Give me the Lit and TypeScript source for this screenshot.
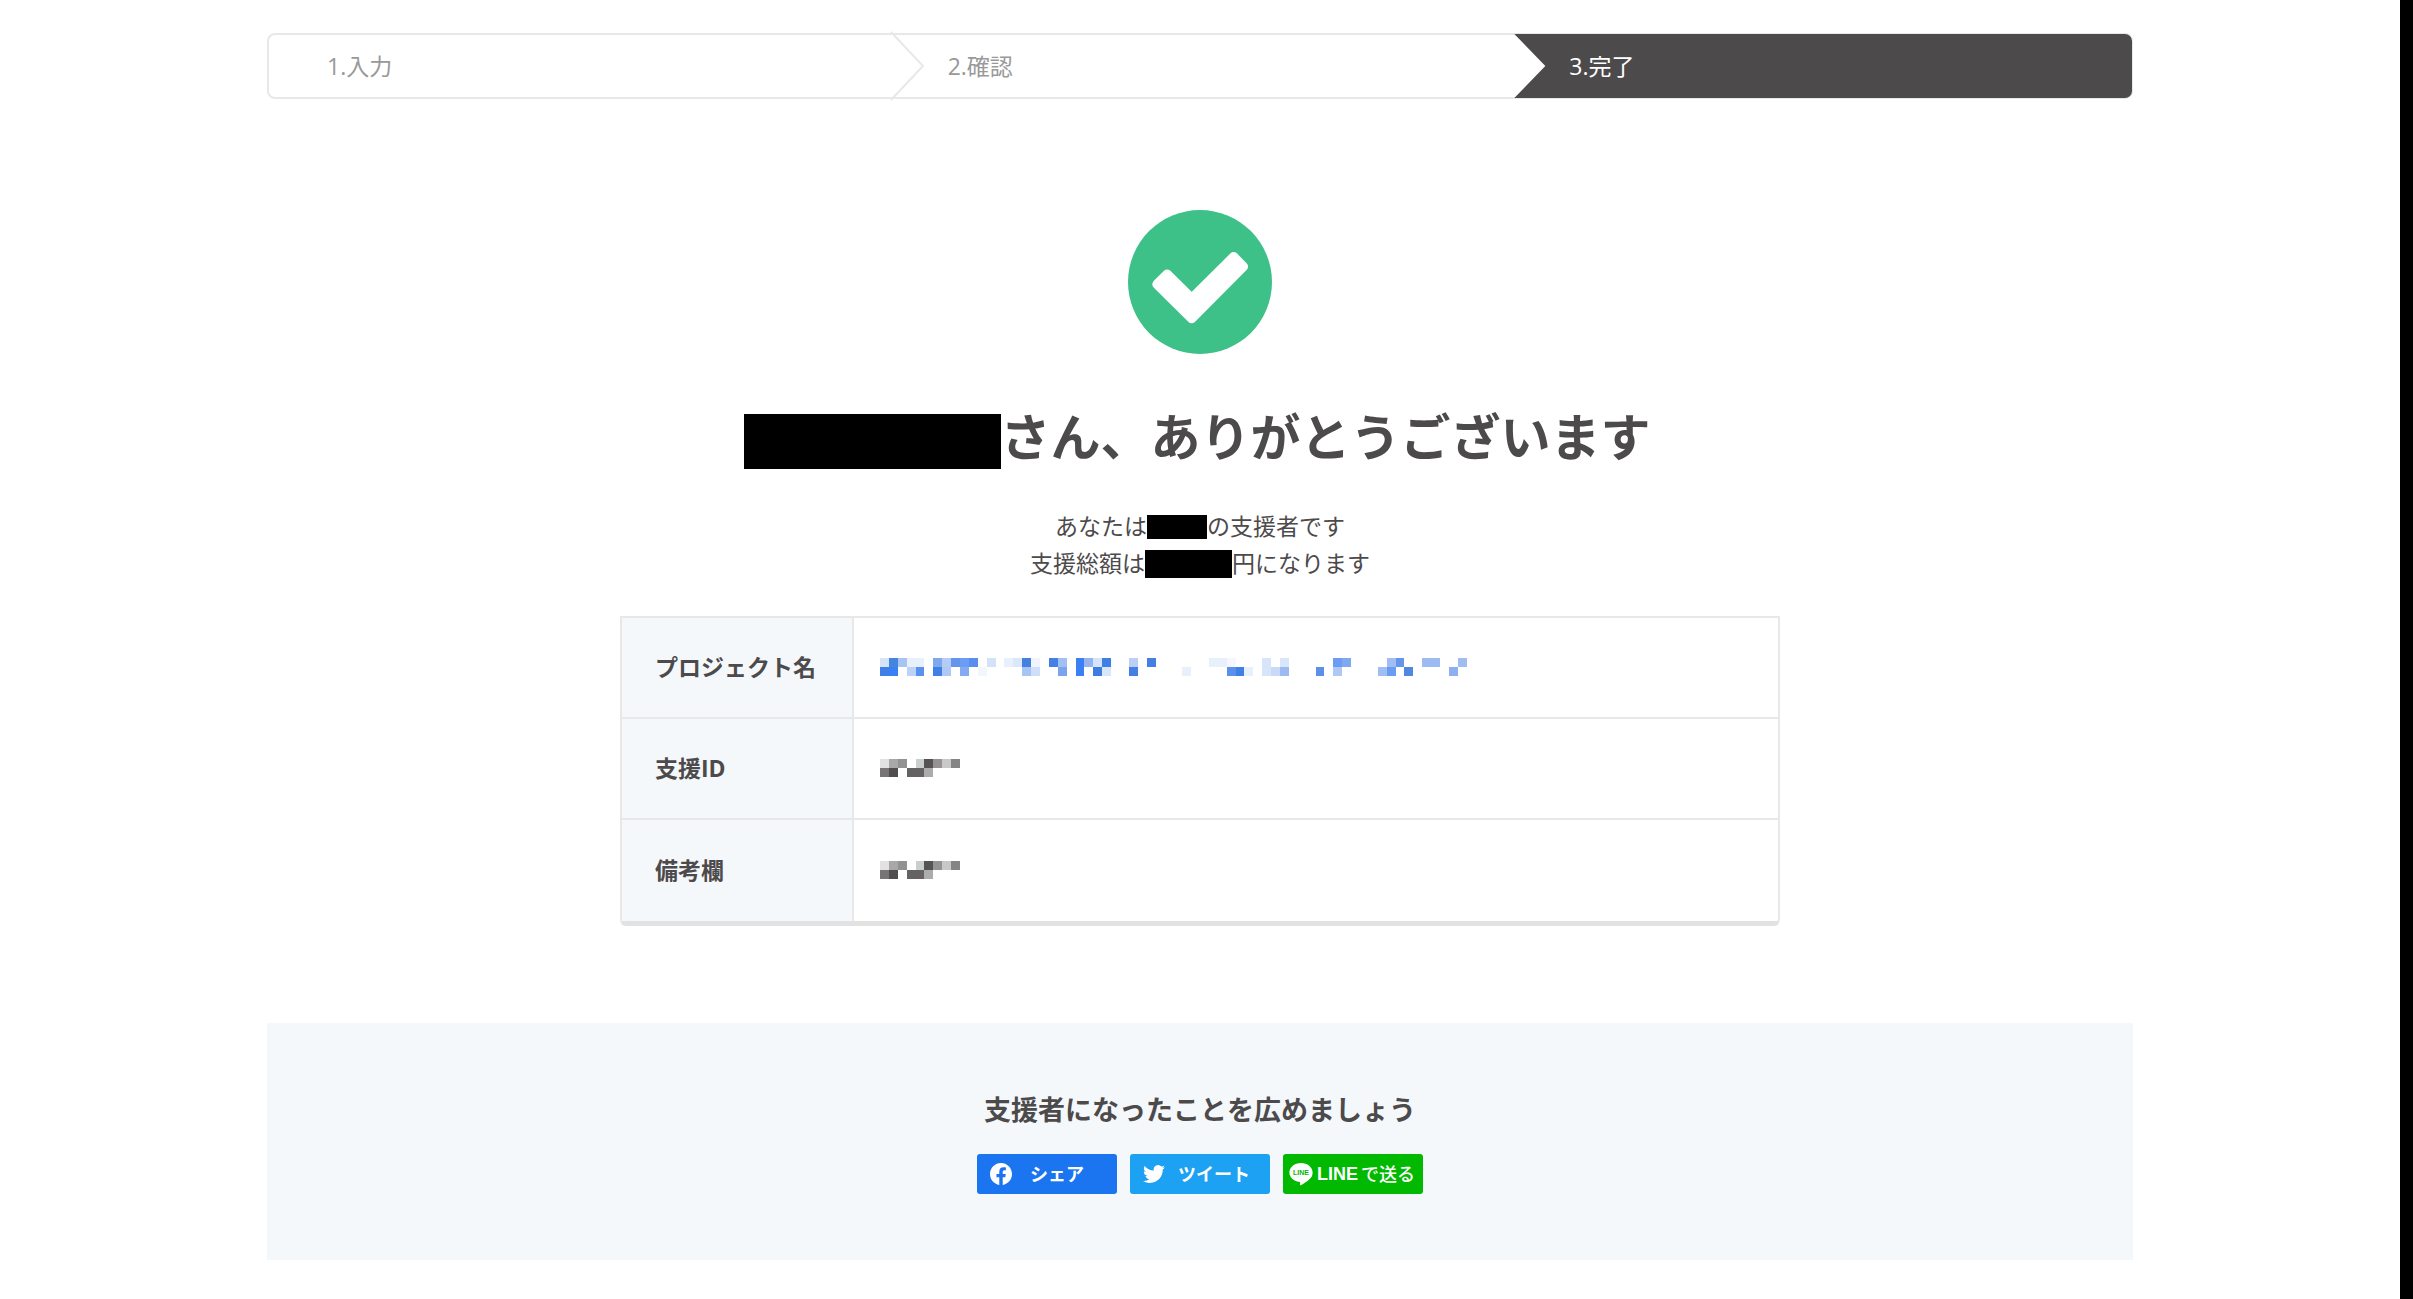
import { LitElement, html, css, svg } from "lit";
import { customElement, property } from "lit/decorators.js";

type Cell = [column: number, row: number, color: string];

const PROJECT_CELLS: Cell[] = [
  [0, 0, "#d6e4f8"], [0, 1, "#4080e4"],
  [1, 0, "#4485e0"], [1, 1, "#3a80f4"],
  [2, 0, "#a8c4f2"],
  [3, 0, "#e8f0fc"], [3, 1, "#bcd2f7"],
  [4, 0, "#e8f0fc"], [4, 1, "#5a90ee"],
  [6, 0, "#80a8ee"], [6, 1, "#4080e4"],
  [7, 0, "#b4ccf6"], [7, 1, "#b0c8f4"],
  [8, 0, "#6494ec"],
  [9, 0, "#6c9cf4"], [9, 1, "#84aaf0"],
  [10, 0, "#5a8eee"],
  [11, 1, "#f2f6fd"],
  [12, 0, "#d4e2f8"],
  [14, 0, "#e8f0fd"],
  [15, 0, "#dce8fa"],
  [16, 0, "#4480dc"], [16, 1, "#a8c4f4"],
  [17, 0, "#f0f5fd"], [17, 1, "#cfdff9"],
  [19, 0, "#4480e4"],
  [20, 0, "#a0bff4"], [20, 1, "#7ca4ec"],
  [22, 0, "#3a80f4"], [22, 1, "#3a80f4"],
  [23, 0, "#96b4f0"],
  [24, 0, "#d4e4fa"], [24, 1, "#3d7de0"],
  [25, 0, "#4080e4"], [25, 1, "#d8e6f8"],
  [28, 0, "#bcd0f6"], [28, 1, "#4480e4"],
  [30, 0, "#4480e4"],
  [34, 1, "#e8f0fc"],
  [37, 0, "#e8f0fc"], [38, 0, "#e8f0fc"], [39, 0, "#f4f8fe"],
  [39, 1, "#5a90ea"], [40, 1, "#4080e4"], [41, 1, "#e8f0fc"],
  [43, 0, "#d8e4fa"], [43, 1, "#d8e4fa"],
  [44, 1, "#c8daf8"],
  [45, 0, "#d8e6fa"], [45, 1, "#9cbaf0"],
  [49, 1, "#5a90e6"],
  [51, 0, "#6c9cf4"], [51, 1, "#b0c8f6"],
  [52, 0, "#80a8ee"],
  [56, 1, "#a0bdf4"],
  [57, 0, "#a0bdf4"], [57, 1, "#6c9cf0"],
  [58, 0, "#6496ec"],
  [59, 1, "#5088e0"],
  [61, 0, "#9cbbf2"], [62, 0, "#9cbbf2"],
  [64, 1, "#8cb0f0"],
  [65, 0, "#a0bdf2"],
];

const VALUE_CELLS: Cell[] = [
  [0, 0, "#e2e2e2"], [0, 1, "#777575"],
  [1, 0, "#a8a8a8"], [1, 1, "#504e4f"],
  [2, 0, "#929292"],
  [3, 1, "#646263"],
  [4, 0, "#cacece"], [4, 1, "#646263"],
  [5, 0, "#555354"], [5, 1, "#acacac"],
  [6, 0, "#949292"],
  [7, 0, "#c8c8c8"],
  [8, 0, "#848484"],
];

/** Coarse two-row mosaic that masks a private value. */
@customElement("masked-value")
export class MaskedValue extends LitElement {
  static styles = css`
    :host { display: block; }
    .mosaic { display: block; height: 18px; }
  `;

  @property({ attribute: false }) cells: Cell[] = [];
  @property({ type: Number }) columns = 1;

  render() {
    return html`
      <svg class="mosaic" viewBox="0 0 ${this.columns * 80} 162" preserveAspectRatio="xMinYMid meet"
        shape-rendering="crispEdges" aria-hidden="true">
        ${this.cells.map(([column, row, color]) => svg`
          <rect x=${column * 80} y=${row * 81} width="80" height="81" fill=${color}></rect>`)}
      </svg>`;
  }
}

@customElement("progress-steps")
export class ProgressSteps extends LitElement {
  static styles = css`
    :host { display: block; }
    .steps {
      box-sizing: border-box;
      display: grid;
      grid-template-columns: repeat(3, 1fr);
      grid-template-rows: 62px;
      margin: 0;
      padding: 0;
      list-style: none;
      border: 2px solid #e8e8e8;
      border-radius: 8px;
      font-size: 23px;
      color: #999;
    }
    .step { display: flex; align-items: center; }
    .first { padding-left: 58px; }
    .second { gap: 24px; }
    .chevron { width: 34px; height: 62px; flex: none; overflow: visible; }
    .current {
      margin: -1px -1px -1px 4px;
      padding-left: 55px;
      color: #fff;
      background: #4d4a4b;
      border-radius: 0 7px 7px 0;
      clip-path: polygon(0 0, 100% 0, 100% 100%, 0 100%, 31px 50%);
    }
  `;

  render() {
    return html`
      <ol class="steps">
        <li class="step first">1.入力</li>
        <li class="step second">
          <svg class="chevron" viewBox="0 0 34 62" aria-hidden="true">
            <path d="M1 -3 L33 31 L1 65" fill="none" stroke="#e8e8e8" stroke-width="2"></path>
          </svg>
          <span>2.確認</span>
        </li>
        <li class="step current" aria-current="step">3.完了</li>
      </ol>`;
  }
}

@customElement("share-panel")
export class SharePanel extends LitElement {
  static styles = css`
    :host { display: block; }
    .panel { padding: 67px 24px 66px; background: #f4f8fb; text-align: center; }
    .title { margin: 0 0 24px; font-size: 27px; line-height: 40px; font-weight: 700; }
    .buttons { display: flex; justify-content: center; gap: 13px; }
    .share {
      box-sizing: border-box;
      display: flex;
      align-items: center;
      width: 140px;
      height: 40px;
      padding: 0 0 0 13px;
      border: 0;
      border-radius: 3px;
      color: #fff;
      font: inherit;
      font-size: 18px;
      font-weight: 700;
      line-height: 24px;
      white-space: nowrap;
      cursor: pointer;
    }
    .facebook { gap: 18px; background: #1b74f0; }
    .twitter { gap: 13px; background: #1da1f2; }
    .line { gap: 4px; padding-left: 6px; background: #00b900; }
    .icon { width: 22px; height: 22px; flex: none; }
    .bubble { width: 24px; height: 24px; flex: none; }
    .bubble-text { font: 700 7px "Liberation Sans", sans-serif; fill: #00b900; }
    .line-label { display: flex; gap: 3px; font-weight: 500; }
    .line-name { font-family: "Liberation Sans", sans-serif; font-weight: 700; }
  `;

  render() {
    return html`
      <section class="panel">
        <h2 class="title">支援者になったことを広めましょう</h2>
        <div class="buttons">
          <button class="share facebook" type="button">
            <svg class="icon" viewBox="0 0 24 24" fill="#fff" aria-hidden="true">
              <path d="M24 12.073c0-6.627-5.373-12-12-12s-12 5.373-12 12c0 5.99 4.388 10.954 10.125 11.854v-8.385H7.078v-3.47h3.047V9.43c0-3.007 1.792-4.669 4.533-4.669 1.312 0 2.686.235 2.686.235v2.953H15.83c-1.491 0-1.956.925-1.956 1.874v2.25h3.328l-.532 3.47h-2.796v8.385C19.612 23.027 24 18.062 24 12.073z"></path>
            </svg>
            <span>シェア</span>
          </button>
          <button class="share twitter" type="button">
            <svg class="icon" viewBox="0 0 24 24" fill="#fff" aria-hidden="true">
              <path d="M23.953 4.57a10 10 0 01-2.825.775 4.958 4.958 0 002.163-2.723c-.951.555-2.005.959-3.127 1.184a4.92 4.92 0 00-8.384 4.482C7.69 8.095 4.067 6.13 1.64 3.162a4.822 4.822 0 00-.666 2.475c0 1.71.87 3.213 2.188 4.096a4.904 4.904 0 01-2.228-.616v.06a4.923 4.923 0 003.946 4.827 4.996 4.996 0 01-2.212.085 4.936 4.936 0 004.604 3.417 9.867 9.867 0 01-6.102 2.105c-.39 0-.779-.023-1.17-.067a13.995 13.995 0 007.557 2.209c9.053 0 13.998-7.496 13.998-13.985 0-.21 0-.42-.015-.63A9.935 9.935 0 0024 4.59z"></path>
            </svg>
            <span>ツイート</span>
          </button>
          <button class="share line" type="button">
            <svg class="bubble" viewBox="0 0 24 24" aria-hidden="true">
              <path d="M12 1C5.6 1 .4 5.200 .4 10.400c0 4.700 4.100 8.600 9.700 9.300 1.300.3 1 1 .8 3 0 .7.4.8 1 .5 2.200-1.100 8-4.800 10.200-7.700 1-1.400 1.500-3.100 1.500-5.100C23.600 5.200 18.400 1 12 1z" fill="#fff"></path>
              <text class="bubble-text" x="12" y="13" text-anchor="middle">LINE</text>
            </svg>
            <span class="line-label"><span class="line-name">LINE</span><span>で送る</span></span>
          </button>
        </div>
      </section>`;
  }
}

@customElement("app-root")
export class AppRoot extends LitElement {
  static styles = css`
    :host {
      box-sizing: border-box;
      display: block;
      min-height: 100vh;
      padding: 33px 24px;
      border-right: 13px solid #000;
      background: #fff;
      color: #4d4a4b;
      font-family: "Open Sans", "Noto Sans CJK JP", sans-serif;
      font-size: 23px;
      line-height: 37px;
    }
    .page { max-width: 1866px; margin: 0 auto; }
    .done { display: block; width: 144px; height: 144px; margin: 111px auto 51px; }
    .thanks {
      display: flex;
      align-items: flex-end;
      justify-content: center;
      margin: 0 0 39px;
      padding-right: 6px;
      font-size: 50px;
      line-height: 64px;
      font-weight: 700;
    }
    .redacted { display: block; flex: none; background: #000; }
    .name { width: 257px; height: 55px; }
    .count { width: 60px; height: 24px; }
    .amount { width: 87px; height: 28px; }
    .summary { display: flex; align-items: center; justify-content: center; margin: 0; }
    .details {
      box-sizing: border-box;
      max-width: 1160px;
      margin: 34px auto 97px;
      border: 2px solid #e8e8e8;
      border-bottom: 5px solid #e2e2e2;
      border-radius: 0 0 6px 6px;
    }
    .table { width: 100%; border-collapse: separate; border-spacing: 0; }
    .label, .value {
      box-sizing: border-box;
      height: 101px;
      padding: 0;
      vertical-align: middle;
      border-bottom: 2px solid #e8e8e8;
    }
    .label {
      width: 232px;
      padding-left: 33px;
      text-align: left;
      font-weight: 700;
      background: #f4f8fb;
      border-right: 2px solid #e8e8e8;
    }
    .value { padding: 0 26px 2px; }
    .row:last-child > .label, .row:last-child > .value { border-bottom: 0; }
  `;

  render() {
    return html`
      <main class="page">
        <progress-steps></progress-steps>
        <svg class="done" viewBox="0 0 144 144" aria-hidden="true">
          <circle cx="72" cy="72" r="72" fill="#3ec188"></circle>
          <path d="M28.800 74.300 L39.200 63.900 L63.700 88.300 L105.700 46.500 L115.600 56.600 L63.700 108.800 Z"
            fill="#fff" stroke="#fff" stroke-width="9" stroke-linejoin="round"></path>
        </svg>
        <h1 class="thanks"><span class="redacted name"></span><span>さん、ありがとうございます</span></h1>
        <p class="summary"><span>あなたは</span><span class="redacted count"></span><span>の支援者です</span></p>
        <p class="summary"><span>支援総額は</span><span class="redacted amount"></span><span>円になります</span></p>
        <div class="details">
          <table class="table">
            <tbody>
              <tr class="row">
                <th class="label" scope="row">プロジェクト名</th>
                <td class="value">
                  <a href="#project" aria-label="プロジェクト名">
                    <masked-value .cells=${PROJECT_CELLS} .columns=${66}></masked-value>
                  </a>
                </td>
              </tr>
              <tr class="row">
                <th class="label" scope="row">支援ID</th>
                <td class="value"><masked-value .cells=${VALUE_CELLS} .columns=${9}></masked-value></td>
              </tr>
              <tr class="row">
                <th class="label" scope="row">備考欄</th>
                <td class="value"><masked-value .cells=${VALUE_CELLS} .columns=${9}></masked-value></td>
              </tr>
            </tbody>
          </table>
        </div>
        <share-panel></share-panel>
      </main>`;
  }
}
